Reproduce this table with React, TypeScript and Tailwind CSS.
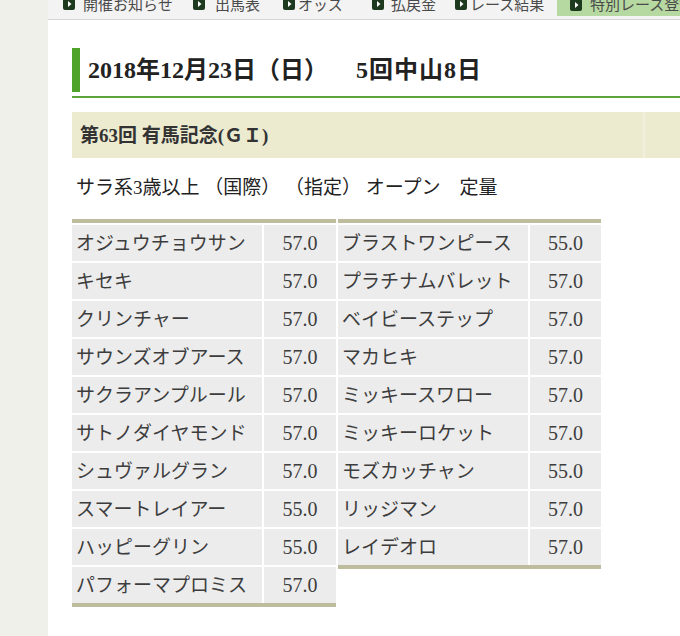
import React from 'react';

const serif = "font-['Liberation_Serif','Noto_Sans_CJK_JP',serif]";
const sans = "font-['Noto_Sans_CJK_JP','Liberation_Sans',sans-serif]";

const tabs = [
  { label: '開催お知らせ', width: 'w-[130px]', gap: 'gap-[8px]' },
  { label: '出馬表', width: 'w-[90px]', gap: 'gap-[10px]' },
  { label: 'オッズ', width: 'w-[89px]', gap: 'gap-[3px]' },
  { label: '払戻金', width: 'w-[83px]', gap: 'gap-[7px]' },
  { label: 'レース結果', width: 'w-[110px]', gap: 'gap-[3px]' },
];

const leftRows: [string, string][] = [
  ['オジュウチョウサン', '57.0'],
  ['キセキ', '57.0'],
  ['クリンチャー', '57.0'],
  ['サウンズオブアース', '57.0'],
  ['サクラアンプルール', '57.0'],
  ['サトノダイヤモンド', '57.0'],
  ['シュヴァルグラン', '57.0'],
  ['スマートレイアー', '55.0'],
  ['ハッピーグリン', '55.0'],
  ['パフォーマプロミス', '57.0'],
];

const rightRows: [string, string][] = [
  ['ブラストワンピース', '55.0'],
  ['プラチナムバレット', '57.0'],
  ['ベイビーステップ', '57.0'],
  ['マカヒキ', '57.0'],
  ['ミッキースワロー', '57.0'],
  ['ミッキーロケット', '57.0'],
  ['モズカッチャン', '55.0'],
  ['リッジマン', '57.0'],
  ['レイデオロ', '57.0'],
];

function TabIcon() {
  return (
    <svg width="12" height="12" viewBox="0 0 12 12" className="shrink-0">
      <rect x="0" y="0" width="12" height="12" rx="2" fill="#1d3a1f" />
      <path d="M5 3 L8.5 6 L5 9 Z" fill="#ffffff" />
    </svg>
  );
}

function WeightTable({ rows, width, cols }: { rows: [string, string][]; width: string; cols: string }) {
  return (
    <div className={`${width} border-t-4 border-b-4 border-[#bdbc9c] pt-[2px] flex flex-col gap-[2px]`}>
      {rows.map(([name, weight]) => (
        <div key={name} className={`grid ${cols} gap-x-[2px] h-[36px]`}>
          <div className="bg-[#ececec] flex items-center pl-[4px] text-[19px] text-[#3d3d3d] leading-none">
            {name}
          </div>
          <div className="bg-[#ececec] flex items-center justify-center text-[20px] text-[#3d3d3d] leading-none">
            {weight}
          </div>
        </div>
      ))}
    </div>
  );
}

export default function App() {
  return (
    <div className="flex w-[680px] h-[636px] overflow-hidden bg-white">
      <div className="w-[48px] shrink-0 bg-[#f0f0eb]" />

      <div className="flex-1 min-w-0 flex flex-col">
        {/* top menu, scrolled partly out of view */}
        <div className={`${sans} h-[20px] overflow-hidden flex items-end bg-[#f3f3f3] border-b border-[#d6d6d6] pl-[7px]`}>
          {tabs.map((t) => (
            <div key={t.label} className={`${t.width} shrink-0 flex items-center ${t.gap} pl-[8px] pb-[8px] text-[15px] leading-none text-[#4a4a4a]`}>
              <TabIcon />
              <span className="whitespace-nowrap">{t.label}</span>
            </div>
          ))}
          <div className="flex-1 min-w-0 self-stretch mb-[3px] flex items-end gap-[8px] pl-[13px] pb-[5px] bg-[#b6d8a1] text-[15px] leading-none text-[#4a4a4a]">
            <TabIcon />
            <span className="whitespace-nowrap">特別レース登録</span>
          </div>
        </div>

        <div className={`${serif} pl-[24px] pt-[28px] text-[#222]`}>
          <div className="border-b-2 border-[#5ba33a] pb-[4px]">
            <div className="flex items-center gap-[8px] h-[44px]">
              <div className="w-[8px] h-full bg-[#4fa32a]" />
              <h1 className="text-[24px] font-bold leading-none whitespace-nowrap">
                2018年12月23日（日）<span className="ml-[28px] tracking-[1px]">5回中山8日</span>
              </h1>
            </div>
          </div>

          <div className="mt-[14px] h-[46px] flex bg-[#ecebd0]">
            <div className="flex-1 flex items-center pl-[8px] text-[19px] font-bold text-[#333] leading-none">
              第63回 有馬記念(ＧＩ)
            </div>
            <div className="w-[37px] border-l-2 border-[#f1f0de]" />
          </div>

          <p className="mt-[17px] pl-[4px] text-[19px] leading-[26px] text-[#222] whitespace-nowrap">
            サラ系3歳以上 （国際） （指定） オープン　定量
          </p>

          <div className="mt-[18px] flex items-start gap-[2px]">
            <WeightTable rows={leftRows} width="w-[264px]" cols="grid-cols-[190px_72px]" />
            <WeightTable rows={rightRows} width="w-[263px]" cols="grid-cols-[190px_71px]" />
          </div>
        </div>
      </div>
    </div>
  );
}
